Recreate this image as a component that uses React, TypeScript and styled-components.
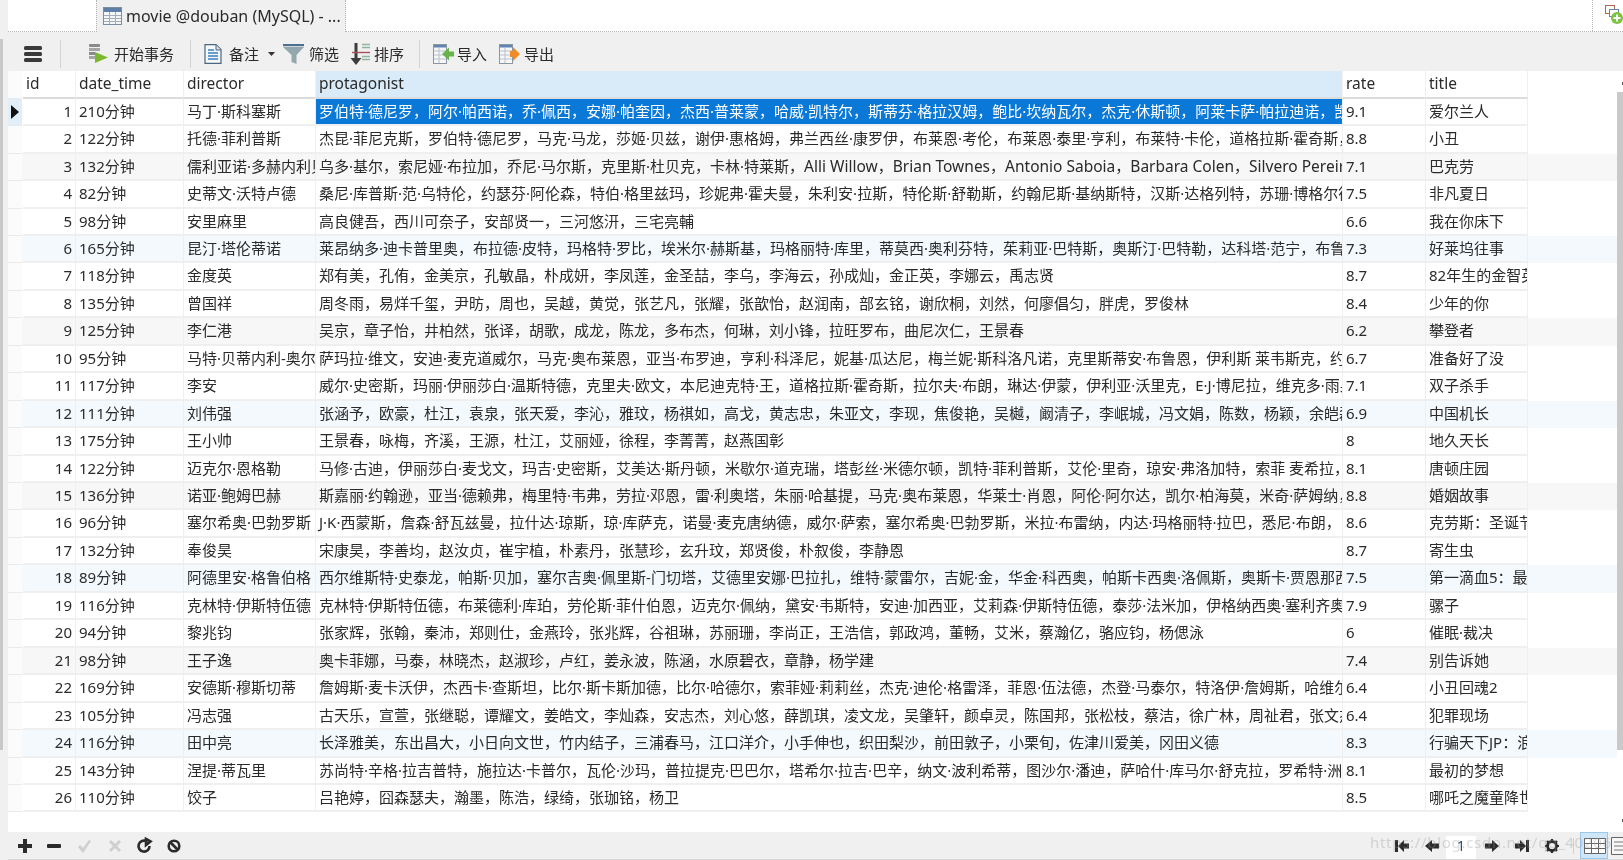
import React from "react";
import styled, { createGlobalStyle } from "styled-components";

const Global = createGlobalStyle`
  html, body { margin: 0; padding: 0; background: #f0f0f0; overflow: hidden; }
  body { font-family: "Noto Sans", "Noto Sans CJK SC", sans-serif; color: #2a2a2a; }
`;

const Page = styled.div`
  width: 1623px; height: 860px; display: flex; flex-direction: column;
  position: relative; overflow: hidden; background: #f0f0f0; font-size: 15px; filter: blur(0.35px);
`;
const LeftRail = styled.div`position: absolute; left: 0; top: 39px; width: 3px; height: 711px; background: #c9c9c9;`;

const TabBar = styled.div`
  height: 32px; flex: none; display: flex; margin-left: 8px; background: #fff;
  border-bottom: 1px dotted #b5b5b5; box-sizing: border-box;
`;
const TabGap = styled.div`width: 88px; flex: none;`;
const Tab = styled.div`
  width: 250px; height: 32px; flex: none; box-sizing: border-box; background: #f0f0f0;
  border-left: 1px dotted #b5b5b5; border-right: 1px dotted #b5b5b5;
  display: flex; align-items: center; gap: 4px; padding: 0 0 0 6px; font-size: 16px; white-space: nowrap;
`;
const TabFill = styled.div`flex: 1;`;
const TabAdd = styled.div`
  width: 31px; flex: none; box-sizing: border-box; border-left: 1px dotted #b5b5b5; display: flex; align-items: flex-start;
  padding: 5px 0 0 12px; overflow: hidden;
`;

const Toolbar = styled.div`
  height: 39px; flex: none; box-sizing: border-box; padding-top: 4px; margin-left: 8px; display: flex; align-items: center; font-size: 15px;
`;
const Sep = styled.div`width: 1px; height: 28px; background: #d4d4d4; flex: none; margin: ${p => p.$m};`;
const Tool = styled.div`display: flex; align-items: center; gap: ${p => p.$gap ?? 5}px; flex: none; margin-left: ${p => p.$ml ?? 0}px; white-space: nowrap;`;

const Grid = styled.div`flex: 1; margin-left: 8px; background: #fff; position: relative; min-height: 0; display: flex; flex-direction: column;`;
const HeaderRow = styled.div`display: flex; height: 27.7px; flex: none;`;
const Row = styled.div`display: flex; height: 27.46px; flex: none; background: ${p => p.$bg};`;
const Gutter = styled.div`
  width: 14px; flex: none; box-sizing: border-box; margin-right: 1px; background: ${p => p.$on ? "#e2eff9" : "#fbfbfb"};
  border-bottom: 1px solid #eaeaea; display: flex; align-items: center; padding-left: 3px;
`;
const Cell = styled.div`
  width: ${p => p.$w}px; flex: none; box-sizing: border-box; overflow: hidden; white-space: nowrap;
  line-height: 25px; padding-left: 3px; border-right: 1.5px solid #efefef; border-bottom: 2px solid #efefef;
  ${p => p.$right ? "text-align: right; padding: 0 3px 0 0;" : ""}
  ${p => p.$sel ? "background: #0a78d7; color: #fff;" : ""}
`;
const Head = styled(Cell)`
  border-bottom: 2px solid #dcdcdc; font-size: 15.5px; line-height: 25px;
  background: ${p => p.$active ? "#d9ebf8" : "#fff"};
`;
const Latin = styled.span`font-size: 15.5px;`;

const ScrollTrack = styled.div`position: absolute; right: 0; top: 0; bottom: 0; width: 6px; background: #fff;`;
const ScrollThumb = styled.div`position: absolute; left: 0; top: 21px; height: 658px; width: 6px; background: #c9c9c9;`;
const ScrollTick = styled.div`position: absolute; right: 0; top: ${p => p.$top}px; width: 1px; height: 3px; background: #555;`;

const Footer = styled.div`
  height: 27px; flex: none; margin-left: 8px; display: flex; align-items: center;
  border-bottom: 1px solid #d8d8d8; box-sizing: content-box;
`;
const FootIcon = styled.span`display: flex; flex: none; margin-left: ${p => p.$ml}px;`;
const Spacer = styled.div`flex: 1;`;
const PageBox = styled.div`
  width: 30px; height: 23px; align-self: flex-end; background: #fff; text-align: center; line-height: 20px;
  font-size: 14px; color: #1f4f80; flex: none; margin-left: 7px;
`;
const FootSep = styled.div`width: 1px; height: 16px; background: #d0d0d0; flex: none; margin-left: 14px;`;
const ViewBtn = styled.div`
  width: ${p => p.$w}px; height: 27px; flex: none; box-sizing: border-box; margin-left: ${p => p.$ml}px; display: flex; align-items: center;
  overflow: hidden; padding-left: ${p => p.$on ? 3 : 0}px;
  background: ${p => p.$on ? "#cfe6f8" : "transparent"}; border: ${p => p.$on ? "1px solid #9cc8ec" : "none"};
`;
const Watermark = styled.div`
  position: absolute; left: 1370px; top: 832px; font-size: 15px; color: rgba(150,150,150,.34); letter-spacing: .7px; white-space: nowrap; pointer-events: none;
`;

const GridIcon = () => (
  <svg width="19" height="18" viewBox="0 0 19 18">
    <rect x=".5" y=".5" width="18" height="17" fill="#f3f6f9" stroke="#7d8d9d" />
    <rect x="1" y="1" width="17" height="4" fill="#5f7fa6" />
    <path d="M1 8.500h17M1 11.500h17M1 14.500h17M6.500 5v12M12.500 5v12" stroke="#a2adb8" />
  </svg>
);
const Menu = () => (
  <svg width="18" height="18" viewBox="0 0 18 18"><g fill="#3a3a3a"><rect y="1" width="18" height="4" rx="1.500" /><rect y="7" width="18" height="4" rx="1.500" /><rect y="13" width="18" height="4" rx="1.500" /></g></svg>
);
const Begin = () => (
  <svg width="19" height="19" viewBox="0 0 19 19">
    <rect x="0" y="0" width="11" height="3" rx="1" fill="#8a8a8a" /><rect x="0" y="4" width="11" height="3" fill="#a5a5a5" /><rect x="0" y="8" width="6" height="3" fill="#8a8a8a" /><rect x="0" y="12" width="6" height="3" fill="#a5a5a5" />
    <path d="M6 8l13 5.500L6 19z" fill="#7cb82f" />
  </svg>
);
const Note = () => (
  <svg width="18" height="20" viewBox="0 0 18 20">
    <path d="M1 .600h11l5 5V19.400H1z" fill="#f4f8fb" stroke="#4a6780" strokeWidth="1.200" /><path d="M12 1v5h5" fill="#d5e2ec" stroke="#4a6780" />
    <path d="M4 6h6M4 9h10M4 12h10M4 15h10" stroke="#3a7fc0" strokeWidth="1.400" />
  </svg>
);
const Funnel = () => (
  <svg width="21" height="20" viewBox="0 0 21 20">
    <rect x="0" y="0" width="21" height="2.200" fill="#4d6f8f" />
    <path d="M0 3h21l-7.500 8v9l-5-2v-7z" fill="#93a8ae" />
  </svg>
);
const Sort = () => (
  <svg width="20" height="22" viewBox="0 0 20 22">
    <path d="M4.500 0h3v15h4l-5.500 7L.5 15h4z" fill="#3c3c3c" />
    <path d="M12 1.500h8M12 4.500h8M12 13.500h8M12 16.500h8" stroke="#8fb5a0" strokeWidth="1.600" /><path d="M2 9.500h18" stroke="#a5525e" strokeWidth="1.400" />
  </svg>
);
const Transfer = ({ color, out }: { color: string; out?: boolean }) => (
  <svg width="21" height="20" viewBox="0 0 21 20">
    <rect x=".5" y=".5" width="13" height="19" fill="#f5f7f9" stroke="#8a97a3" />
    <rect x="1" y="1" width="12" height="2.500" fill="#5f86b3" />
    <path d="M1 7h12M1 11h12M1 15h12M6 3v16" stroke="#b9c2ca" />
    {out
      ? <path d="M11 7h3V3l7 7-7 7v-4h-3z" fill={color} />
      : <path d="M21 7.500h-5V3.500L9 10l7 6.500v-4h5z" fill={color} />}
  </svg>
);
const TabAddIcon = () => (
  <svg width="18" height="20" viewBox="0 0 18 20">
    <rect x=".5" y=".5" width="9" height="8" fill="#fff" stroke="#b0654a" /><rect x="4.500" y="4.500" width="9" height="7" fill="#fff" stroke="#5d84b3" />
    <circle cx="12" cy="13" r="6" fill="#7cc243" /><path d="M12 9.500v7M8.500 13h7" stroke="#fff" strokeWidth="1.800" />
  </svg>
);

const foot = {
  plus: <path d="M5 0h4v5h5v4H9v5H5V9H0V5h5z" fill="#2b2b2b" />,
  minus: <rect y="5" width="14" height="4" rx="1" fill="#2b2b2b" />,
  check: <path d="M1 8l2-2 3 3 6-8 2 1-8 12z" fill="#cfcfcf" />,
  cross: <path d="M1 3l2-2 4 4 4-4 2 2-4 4 4 4-2 2-4-4-4 4-2-2 4-4z" fill="#cfcfcf" />,
  reload: <path d="M12.500 7A5.500 5.500 0 1 1 9.500 2.200M9 0l4.500 2.500L9 6z" fill="none" stroke="#2b2b2b" strokeWidth="2.600" />,
  stop: <><circle cx="7" cy="7" r="5.300" fill="none" stroke="#2b2b2b" strokeWidth="2.600" /><path d="M3.500 3.500l7 7" stroke="#2b2b2b" strokeWidth="2.600" /></>,
  first: <path d="M0 1h3v12H0zM14 4.500v5H9V13L3 7l6-6v3.500z" fill="#2b2b2b" />,
  prev: <path d="M14 4.500v5H7V13L0 7l7-6v3.500z" fill="#2b2b2b" />,
  next: <path d="M0 4.500v5h7V13l7-6-7-6v3.500z" fill="#2b2b2b" />,
  last: <path d="M14 1h-3v12h3zM0 4.500v5h5V13l6-6-6-6v3.500z" fill="#2b2b2b" />,
  gear: <><circle cx="7" cy="7" r="4.500" fill="none" stroke="#2b2b2b" strokeWidth="2.800" /><path d="M7 0v2.500M7 11.500V14M0 7h2.500M11.500 7H14M2 2l2 2M10 10l2 2M12 2l-2 2M4 10l-2 2" stroke="#2b2b2b" strokeWidth="2.200" /></>,
};
const FI = ({ k, ml }: { k: keyof typeof foot; ml: number }) => (
  <FootIcon $ml={ml}><svg width="14" height="14" viewBox="0 0 14 14" style={{ overflow: "visible" }}>{foot[k]}</svg></FootIcon>
);

const data: [string, string, string, string, string][] = [
  ["210", "马丁·斯科塞斯", "罗伯特·德尼罗，阿尔·帕西诺，乔·佩西，安娜·帕奎因，杰西·普莱蒙，哈威·凯特尔，斯蒂芬·格拉汉姆，鲍比·坎纳瓦尔，杰克·休斯顿，阿莱卡萨·帕拉迪诺，凯瑟琳", "9.1", "爱尔兰人"],
  ["122", "托德·菲利普斯", "杰昆·菲尼克斯，罗伯特·德尼罗，马克·马龙，莎姬·贝兹，谢伊·惠格姆，弗兰西丝·康罗伊，布莱恩·考伦，布莱恩·泰里·亨利，布莱特·卡伦，道格拉斯·霍奇斯，", "8.8", "小丑"],
  ["132", "儒利亚诺·多赫内利贝尔纳", "乌多·基尔，索尼娅·布拉加，乔尼·马尔斯，克里斯·杜贝克，卡林·特莱斯，Alli Willow，Brian Townes，Antonio Saboia，Barbara Colen，Silvero Pereira", "7.1", "巴克劳"],
  ["82", "史蒂文·沃特卢德", "桑尼·库普斯·范·乌特伦，约瑟芬·阿伦森，特伯·格里兹玛，珍妮弗·霍夫曼，朱利安·拉斯，特伦斯·舒勒斯，约翰尼斯·基纳斯特，汉斯·达格列特，苏珊·博格尔德", "7.5", "非凡夏日"],
  ["98", "安里麻里", "高良健吾，西川可奈子，安部贤一，三河悠汧，三宅亮輔", "6.6", "我在你床下"],
  ["165", "昆汀·塔伦蒂诺", "莱昂纳多·迪卡普里奥，布拉德·皮特，玛格特·罗比，埃米尔·赫斯基，玛格丽特·库里，蒂莫西·奥利芬特，茱莉亚·巴特斯，奥斯汀·巴特勒，达科塔·范宁，布鲁斯·邓恩", "7.3", "好莱坞往事"],
  ["118", "金度英", "郑有美，孔侑，金美京，孔敏晶，朴成妍，李凤莲，金圣喆，李乌，李海云，孙成灿，金正英，李娜云，禹志贤", "8.7", "82年生的金智英"],
  ["135", "曾国祥", "周冬雨，易烊千玺，尹昉，周也，吴越，黄觉，张艺凡，张耀，张歆怡，赵润南，部玄铭，谢欣桐，刘然，何廖倡匀，胖虎，罗俊林", "8.4", "少年的你"],
  ["125", "李仁港", "吴京，章子怡，井柏然，张译，胡歌，成龙，陈龙，多布杰，何琳，刘小锋，拉旺罗布，曲尼次仁，王景春", "6.2", "攀登者"],
  ["95", "马特·贝蒂内利-奥尔平", "萨玛拉·维文，安迪·麦克道威尔，马克·奥布莱恩，亚当·布罗迪，亨利·科泽尼，妮基·瓜达尼，梅兰妮·斯科洛凡诺，克里斯蒂安·布鲁恩，伊利斯 莱韦斯克，约翰", "6.7", "准备好了没"],
  ["117", "李安", "威尔·史密斯，玛丽·伊丽莎白·温斯特德，克里夫·欧文，本尼迪克特·王，道格拉斯·霍奇斯，拉尔夫·布朗，琳达·伊蒙，伊利亚·沃里克，E·J·博尼拉，维克多·雨果", "7.1", "双子杀手"],
  ["111", "刘伟强", "张涵予，欧豪，杜江，袁泉，张天爱，李沁，雅玟，杨祺如，高戈，黄志忠，朱亚文，李现，焦俊艳，吴樾，阚清子，李岷城，冯文娟，陈数，杨颖，余皑磊", "6.9", "中国机长"],
  ["175", "王小帅", "王景春，咏梅，齐溪，王源，杜江，艾丽娅，徐程，李菁菁，赵燕国彰", "8", "地久天长"],
  ["122", "迈克尔·恩格勒", "马修·古迪，伊丽莎白·麦戈文，玛吉·史密斯，艾美达·斯丹顿，米歇尔·道克瑞，塔彭丝·米德尔顿，凯特·菲利普斯，艾伦·里奇，琼安·弗洛加特，索菲 麦希拉，", "8.1", "唐顿庄园"],
  ["136", "诺亚·鲍姆巴赫", "斯嘉丽·约翰逊，亚当·德赖弗，梅里特·韦弗，劳拉·邓恩，雷·利奥塔，朱丽·哈基提，马克·奥布莱恩，华莱士·肖恩，阿伦·阿尔达，凯尔·柏海莫，米奇·萨姆纳，", "8.8", "婚姻故事"],
  ["96", "塞尔希奥·巴勃罗斯", "J·K·西蒙斯，詹森·舒瓦兹曼，拉什达·琼斯，琼·库萨克，诺曼·麦克唐纳德，威尔·萨索，塞尔希奥·巴勃罗斯，米拉·布雷纳，内达·玛格丽特·拉巴，悉尼·布朗，", "8.6", "克劳斯：圣诞节的秘密"],
  ["132", "奉俊昊", "宋康昊，李善均，赵汝贞，崔宇植，朴素丹，张慧珍，玄升玟，郑贤俊，朴叙俊，李静恩", "8.7", "寄生虫"],
  ["89", "阿德里安·格鲁伯格", "西尔维斯特·史泰龙，帕斯·贝加，塞尔吉奥·佩里斯-门切塔，艾德里安娜·巴拉扎，维特·蒙雷尔，吉妮·金，华金·科西奥，帕斯卡西奥·洛佩斯，奥斯卡·贾恩那西", "7.5", "第一滴血5：最后的血"],
  ["116", "克林特·伊斯特伍德", "克林特·伊斯特伍德，布莱德利·库珀，劳伦斯·菲什伯恩，迈克尔·佩纳，黛安·韦斯特，安迪·加西亚，艾莉森·伊斯特伍德，泰莎·法米加，伊格纳西奥·塞利齐奥", "7.9", "骡子"],
  ["94", "黎兆钧", "张家辉，张翰，秦沛，郑则仕，金燕玲，张兆辉，谷祖琳，苏丽珊，李尚正，王浩信，郭政鸿，董畅，艾米，蔡瀚亿，骆应钧，杨偲泳", "6", "催眠·裁决"],
  ["98", "王子逸", "奥卡菲娜，马泰，林晓杰，赵淑珍，卢红，姜永波，陈涵，水原碧衣，章静，杨学建", "7.4", "别告诉她"],
  ["169", "安德斯·穆斯切蒂", "詹姆斯·麦卡沃伊，杰西卡·查斯坦，比尔·斯卡斯加德，比尔·哈德尔，索菲娅·莉莉丝，杰克·迪伦·格雷泽，菲恩·伍法德，杰登·马泰尔，特洛伊·詹姆斯，哈维尔", "6.4", "小丑回魂2"],
  ["105", "冯志强", "古天乐，宣萱，张继聪，谭耀文，姜皓文，李灿森，安志杰，刘心悠，薛凯琪，凌文龙，吴肇轩，颜卓灵，陈国邦，张松枝，蔡洁，徐广林，周祉君，张文杰", "6.4", "犯罪现场"],
  ["116", "田中亮", "长泽雅美，东出昌大，小日向文世，竹内结子，三浦春马，江口洋介，小手伸也，织田梨沙，前田敦子，小栗旬，佐津川爱美，冈田义德", "8.3", "行骗天下JP：浪漫篇"],
  ["143", "涅提·蒂瓦里", "苏尚特·辛格·拉吉普特，施拉达·卡普尔，瓦伦·沙玛，普拉提克·巴巴尔，塔希尔·拉吉·巴辛，纳文·波利希蒂，图沙尔·潘迪，萨哈什·库马尔·舒克拉，罗希特·洲", "8.1", "最初的梦想"],
  ["110", "饺子", "吕艳婷，囧森瑟夫，瀚墨，陈浩，绿绮，张珈铭，杨卫", "8.5", "哪吒之魔童降世"],
];

const widths = [53, 108, 132, 1027, 83, 102];
const tint = (i: number) => {
  const n = i + 1;
  if (n % 3 !== 0) return "#fff";
  return n % 6 === 3 ? "#f7f7f7" : "#f4f9fd";
};
const withLatin = (s: string) =>
  s.split(/([A-Za-z][A-Za-z ]{2,})/).map((part, i) => (i % 2 ? <Latin key={i}>{part}</Latin> : part));

export default function App() {
  return (
    <Page>
      <Global />
      <LeftRail />
      <TabBar>
        <TabGap />
        <Tab><GridIcon />movie @douban (MySQL) - ...</Tab>
        <TabFill />
        <TabAdd><TabAddIcon /></TabAdd>
      </TabBar>
      <Toolbar>
        <Tool $ml={16}><Menu /></Tool>
        <Sep $m="0 0 0 18px" />
        <Tool $ml={28} $gap={6}><Begin />开始事务</Tool>
        <Sep $m="0 0 0 16px" />
        <Tool $ml={13} $gap={7}><Note />备注</Tool>
        <Tool $ml={9}><svg width="7" height="4" viewBox="0 0 7 4"><path d="M0 0h7L3.500 4z" fill="#333" /></svg></Tool>
        <Tool $ml={8} $gap={5}><Funnel />筛选</Tool>
        <Tool $ml={11} $gap={4}><Sort />排序</Tool>
        <Sep $m="0 0 0 15px" />
        <Tool $ml={13} $gap={3}><Transfer color="#69b34c" />导入</Tool>
        <Tool $ml={12} $gap={4}><Transfer color="#f08a24" out />导出</Tool>
      </Toolbar>
      <Grid>
        <HeaderRow>
          <Gutter />
          <Head $w={widths[0]}>id</Head>
          <Head $w={widths[1]}>date_time</Head>
          <Head $w={widths[2]}>director</Head>
          <Head $w={widths[3]} $active>protagonist</Head>
          <Head $w={widths[4]}>rate</Head>
          <Head $w={widths[5]}>title</Head>
        </HeaderRow>
        {data.map((r, i) => (
          <Row key={i} $bg={tint(i)}>
            <Gutter $on={i === 0}>
              {i === 0 && <svg width="8" height="14" viewBox="0 0 8 14"><path d="M0 0l8 7-8 7z" fill="#111" /></svg>}
            </Gutter>
            <Cell $w={widths[0]} $right>{i + 1}</Cell>
            <Cell $w={widths[1]}>{r[0]}分钟</Cell>
            <Cell $w={widths[2]}>{r[1]}</Cell>
            <Cell $w={widths[3]} $sel={i === 0}>{withLatin(r[2])}</Cell>
            <Cell $w={widths[4]}>{r[3]}</Cell>
            <Cell $w={widths[5]}>{r[4]}</Cell>
          </Row>
        ))}
        <ScrollTrack>
          <ScrollTick $top={11} />
          <ScrollThumb />
          <ScrollTick $top={748} />
        </ScrollTrack>
      </Grid>
      <Footer>
        <FI k="plus" ml={10} />
        <FI k="minus" ml={15} />
        <FI k="check" ml={16} />
        <FI k="cross" ml={17} />
        <FI k="reload" ml={15} />
        <FI k="stop" ml={16} />
        <Spacer />
        <FI k="first" ml={0} />
        <FI k="prev" ml={16} />
        <PageBox>1</PageBox>
        <FI k="next" ml={9} />
        <FI k="last" ml={16} />
        <FI k="gear" ml={16} />
        <FootSep />
        <ViewBtn $on $w={28} $ml={6}>
          <svg width="22" height="22" viewBox="0 0 22 22"><path d="M.5 3.500h21v15H.5zM.5 8.500h21M.5 13.500h21M7.500 3.500v15M14.500 3.500v15" fill="#fff" stroke="#666" /></svg>
        </ViewBtn>
        <ViewBtn $w={12} $ml={3}>
          <svg width="22" height="22" viewBox="0 0 22 22" style={{ flex: "none" }}><path d="M.5 2.500h21v17H.5z" fill="#f7f7f7" stroke="#666" /><path d="M3 7h16M3 11h16M3 15h16" stroke="#777" /></svg>
        </ViewBtn>
      </Footer>
      <Watermark>https://blog.csdn.net/qq_40206</Watermark>
    </Page>
  );
}
